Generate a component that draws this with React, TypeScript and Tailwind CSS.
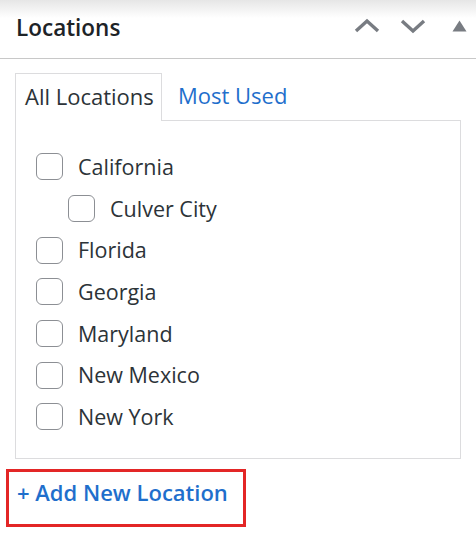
import React from "react";

const items: { label: string; child?: boolean }[] = [
  { label: "California" },
  { label: "Culver City", child: true },
  { label: "Florida" },
  { label: "Georgia" },
  { label: "Maryland" },
  { label: "New Mexico" },
  { label: "New York" },
];

export default function App() {
  return (
    <div
      className="w-[476px] h-[540px] bg-white relative overflow-hidden"
      style={{ fontFamily: '"Open Sans", "Noto Sans", sans-serif' }}
    >
      <div className="h-[59px] border-b border-[#c8c8c8] bg-[linear-gradient(to_bottom,#e6e6e6_0px,#ffffff_18px)] flex items-center pl-[16px] pr-[9px]">
        <div className="text-[22.5px] font-semibold text-[#1d2327] leading-none mt-[-2px]">
          Locations
        </div>
        <div className="ml-auto flex items-center gap-0 mt-[-6px]">
          <svg width="26" height="16" viewBox="0 0 26 16" className="mr-[20px]">
            <path d="M2 13 L13 3 L24 13" fill="none" stroke="#787c82" strokeWidth="3.4" />
          </svg>
          <svg width="26" height="16" viewBox="0 0 26 16" className="mr-[26px]">
            <path d="M2 3 L13 13 L24 3" fill="none" stroke="#787c82" strokeWidth="3.4" />
          </svg>
          <svg width="15" height="12" viewBox="0 0 15 12">
            <path d="M7.5 0.5 L14.5 11.5 L0.5 11.5 Z" fill="#787c82" />
          </svg>
        </div>
      </div>

      <div className="pt-[14px] pl-[15px] w-[461px]">
        <div className="flex items-end">
          <div className="relative z-10 w-[147px] h-[48px] -mb-px border border-b-0 border-[#dcdcde] bg-white flex items-center pl-[9px] pb-[3px] text-[22px] text-[#2c3338]">
            All Locations
          </div>
          <div className="h-[47px] flex items-center pl-[16px] pb-[3px] text-[22px] text-[#1f6fcc]">
            Most Used
          </div>
        </div>
        <div className="border border-[#dcdcde] h-[339px] pt-[25px] pl-[20px]">
          {items.map((it) => (
            <div
              key={it.label}
              className={`h-[41.67px] flex items-center ${it.child ? "pl-[32px]" : ""}`}
            >
              <span className="w-[27px] h-[27px] border border-[#8c8f94] rounded-[6px] bg-white shrink-0" />
              <span className="ml-[15px] text-[21.5px] text-[#2c3338] leading-none">
                {it.label}
              </span>
            </div>
          ))}
        </div>
      </div>

      <div className="mt-[10px] ml-[6px] w-[240px] h-[58px] border-[3px] border-[#e32626] flex items-center pl-[8px] pb-[12px]">
        <span className="text-[22px] font-semibold text-[#1f6fcc] leading-none">
          + Add New Location
        </span>
      </div>
    </div>
  );
}
